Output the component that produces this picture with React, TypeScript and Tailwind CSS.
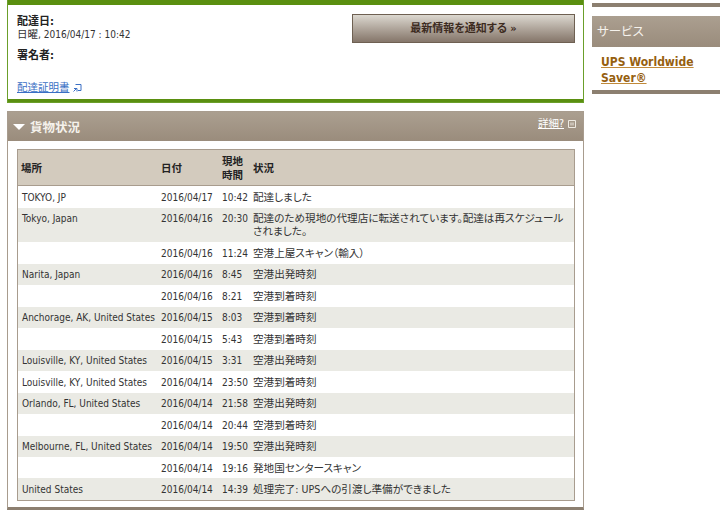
const F = "font-['DejaVu_Sans_Condensed','Noto_Sans_CJK_JP',sans-serif] [font-feature-settings:'palt']";
const rows: [string, string, string, string, number][] = [
  ["TOKYO, JP", "2016/04/17", "10:42", "配達しました", 22],
  ["Tokyo, Japan", "2016/04/16", "20:30", "配達のため現地の代理店に転送されています。配達は再スケジュールされました。", 34],
  ["", "2016/04/16", "11:24", "空港上屋スキャン（輸入）", 22],
  ["Narita, Japan", "2016/04/16", "8:45", "空港出発時刻", 21],
  ["", "2016/04/16", "8:21", "空港到着時刻", 22],
  ["Anchorage, AK, United States", "2016/04/15", "8:03", "空港到着時刻", 21],
  ["", "2016/04/15", "5:43", "空港到着時刻", 22],
  ["Louisville, KY, United States", "2016/04/15", "3:31", "空港出発時刻", 21],
  ["Louisville, KY, United States", "2016/04/14", "23:50", "空港到着時刻", 22],
  ["Orlando, FL, United States", "2016/04/14", "21:58", "空港出発時刻", 21],
  ["", "2016/04/14", "20:44", "空港到着時刻", 22],
  ["Melbourne, FL, United States", "2016/04/14", "19:50", "空港出発時刻", 21],
  ["", "2016/04/14", "19:16", "発地国センタースキャン", 21],
  ["United States", "2016/04/14", "14:39", "処理完了: UPSへの引渡し準備ができました", 22],
];
export default function App() {
  return (
    <div className={`${F} flex w-[720px] h-[513px] overflow-hidden bg-white text-[10px] leading-[13px] text-[#333]`}>
      <div className="ml-[7px] w-[577px] shrink-0">
        <div className="h-[103px] border-x border-b border-[#6b9f2a] flex flex-col">
          <div className="h-[5px] bg-[#5a8f10] shrink-0" />
          <div className="flex-1 flex justify-between pl-[9px] pr-[8px] pt-[9px]">
            <div>
              <div className="font-bold text-[#222] text-[11px] mt-[1px]">配達日:</div>
              <div className="mt-[0px]"><span className="text-[10.5px]">日曜,</span> 2016/04/17 : 10:42</div>
              <div className="font-bold text-[#222] mt-[8px] text-[11px]">署名者:</div>
              <div className="mt-[19px] flex items-center gap-[3px]">
                <a className="text-[#3a6fc4] underline text-[10.5px]">配達証明書</a>
                <svg width="9" height="9" viewBox="0 0 9 9" fill="none" stroke="#3a6fc4"><path d="M2.5 1.5h5.5v6h-3M0.5 8.5l3-3M1 5.5h3v3" /></svg>
              </div>
            </div>
            <div className="w-[223px] h-[29px] bg-gradient-to-b from-[#dcd8d0] to-[#85766a] border border-[#6e6052] flex items-center justify-center font-bold text-[#3d2b1f] text-[11px]">最新情報を通知する »</div>
          </div>
          <div className="h-[3px] bg-[#5a8f10] shrink-0" />
        </div>
        <div className="mt-[8px] h-[399px] border-x border-[#a89c8e] border-b-[3px] border-b-[#8c7f70] flex flex-col">
          <div className="h-[30px] border-t border-[#a89c8e] bg-gradient-to-b from-[#ab9f90] to-[#9a8c7c] flex items-center justify-between pl-[5px] pr-[7px] shrink-0">
            <div className="flex items-center gap-[5px] mt-[1px]">
              <span className="w-0 h-0 border-x-[6px] border-x-transparent border-t-[6px] border-t-white" />
              <span className="font-bold text-[12.5px] text-[#f5f2ec]">貨物状況</span>
            </div>
            <div className="flex items-center gap-[4px] -mt-[6px]">
              <a className="text-[10.5px] text-white underline">詳細?</a>
              <svg width="8" height="8" viewBox="0 0 8 8" fill="none" stroke="#eeeae2"><path d="M0.5 0.5h7v7h-7zM3 2.5v3M5 2.5v3" /></svg>
            </div>
          </div>
          <div className="pl-[9px] pr-[8px] pt-[8px]">
            <div className="border border-[#a89c8e]">
              <div className="grid grid-cols-[139px_61px_31px_1fr] bg-[#d3cbbe] border-b border-[#a89c8e] h-[36px] items-center font-bold text-[10.5px] text-[#222] pl-[4px] leading-[14px]">
                <div className="-ml-[1px]">場所</div><div>日付</div><div>現地<br/>時間</div><div>状況</div>
              </div>
              {rows.map((r, i) => (
                <div key={i} style={{ height: r[4] }} className={`grid grid-cols-[139px_61px_31px_1fr] pl-[4px] pr-[6px] ${i % 2 && i !== 13 ? "pt-[4px]" : "pt-[5px]"} ${i % 2 ? "bg-[#eaeae4]" : "bg-white"}`}>
                  <div className="whitespace-nowrap">{r[0]}</div><div>{r[1]}</div><div>{r[2]}</div><div className="text-[10.6px]">{r[3]}</div>
                </div>
              ))}
            </div>
          </div>
        </div>
      </div>
      <div className="ml-[8px] flex-1">
        <div className="h-[7px] border-b-[4px] border-[#8c7f70]" />
        <div className="mt-[9px] border-b-[4px] border-[#8c7f70]">
          <div className="h-[31px] bg-gradient-to-b from-[#ab9f90] to-[#9a8c7c] flex items-center pl-[5px] text-[#f5f2ec] text-[12.5px]">サービス</div>
          <div className="pl-[9px] pt-[7px] pb-[4px] font-bold text-[12px] leading-[16px] text-[#96600f] underline decoration-[#c08a3a]">UPS Worldwide<br/>Saver®</div>
        </div>
      </div>
    </div>
  );
}
